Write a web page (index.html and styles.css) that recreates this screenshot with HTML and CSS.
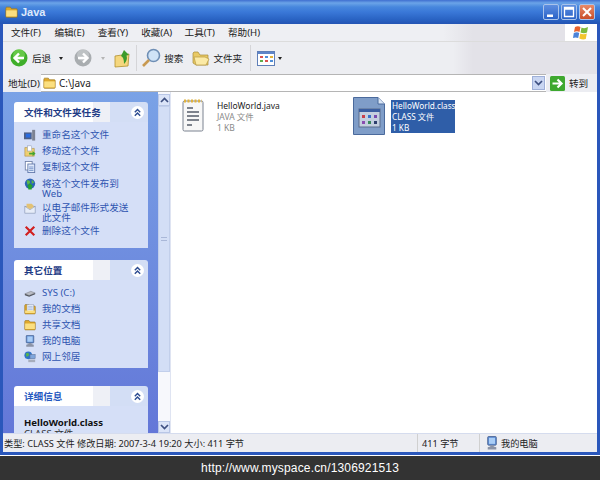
FILE: index.html
```html
<!DOCTYPE html>
<html lang="zh">
<head>
<meta charset="utf-8">
<title>Java</title>
<link rel="stylesheet" href="styles.css">
</head>
<body>
<svg class="defs" width="0" height="0">
  <defs>
    <symbol id="folder" viewBox="0 0 16 14">
      <path d="M1 3 L1 12.500 Q1 13.500 2 13.500 L14 13.500 Q15 13.500 15 12.500 L15 4 Q15 3 14 3 L8 3 L6.500 1 L2 1 Q1 1 1 3Z" fill="#e0a92c" stroke="#97741c" stroke-width=".8"/>
      <path d="M1.500 5 L14.500 5 L14.500 12.500 L1.500 12.500Z" fill="#fbdf80"/>
    </symbol>
    <symbol id="docs" viewBox="0 0 16 14">
      <path d="M1 3 L1 12.500 Q1 13.500 2 13.500 L14 13.500 Q15 13.500 15 12.500 L15 4 Q15 3 14 3 L8 3 L6.500 1 L2 1 Q1 1 1 3Z" fill="#e0a92c" stroke="#97741c" stroke-width=".8"/>
      <rect x="4" y="1" width="9" height="9" fill="#e7edf8" stroke="#8a96ad" stroke-width=".6"/>
      <path d="M5.500 3.500H11.500M5.500 5.500H11.500M5.500 7.500H11.500" stroke="#8ea6cf" stroke-width=".8"/>
      <path d="M1.500 9 L14.500 9 L14.500 12.500 L1.500 12.500Z" fill="#fbdf80"/>
    </symbol>
    <symbol id="computer" viewBox="0 0 14 16">
      <rect x="2" y="0.500" width="10" height="10" rx="1" fill="#5f8fd6" stroke="#47608f"/>
      <rect x="3.500" y="2" width="7" height="7" fill="#a9cdf6"/>
      <path d="M5 10.500 L5 12 L2 13 L2 15.500 L12 15.500 L12 13 L9 12 L9 10.500Z" fill="#8b93a6"/>
    </symbol>
    <symbol id="chevrons" viewBox="0 0 13 13">
      <circle cx="6.500" cy="6.500" r="6.500" fill="#fff"/>
      <path d="M3.800 6.200L6.500 3.500L9.200 6.200M3.800 9.700L6.500 7L9.200 9.700" fill="none" stroke="#2a4a90" stroke-width="1.400"/>
    </symbol>
  </defs>
</svg>
<div class="window">
  <header class="titlebar">
    <svg class="title-icon"><use href="#folder"/></svg>
    <span class="title-text">Java</span>
    <div class="caption">
      <span class="cap cap-blue"><svg viewBox="0 0 14 14"><rect x="3" y="9.500" width="6" height="2.500" fill="#fff"/></svg></span>
      <span class="cap cap-blue"><svg viewBox="0 0 14 14"><path d="M2.500 2.500H11.500V11.500H2.500Z M2.500 4H11.500" fill="none" stroke="#fff" stroke-width="1.300"/></svg></span>
      <span class="cap cap-red"><svg viewBox="0 0 14 14"><path d="M3 3L11 11M11 3L3 11" stroke="#fff" stroke-width="2"/></svg></span>
    </div>
  </header>
  <div class="client">
    <nav class="menubar">
      <div class="menus">
        <span>文件(F)</span><span>编辑(E)</span><span>查看(Y)</span><span>收藏(A)</span><span>工具(T)</span><span>帮助(H)</span>
      </div>
      <div class="logo">
        <svg viewBox="0 0 18 16" width="18" height="16">
          <path d="M3 2 Q6 0.500 8.500 2 L7.500 7 Q5 5.500 2 7Z" fill="#e8622c"/>
          <path d="M9.500 2.500 Q12.500 4 16 2 L15 7.500 Q12 9 8.500 7.500Z" fill="#7cbb3c"/>
          <path d="M1.800 8 Q5 6.500 7.200 8 L6.200 13 Q3.500 11.800 1 13Z" fill="#4b83d8"/>
          <path d="M8.300 8.500 Q11.500 10 14.800 8.500 L13.800 14 Q11 15 7.300 13.500Z" fill="#f3c52e"/>
        </svg>
      </div>
    </nav>
    <div class="toolbar">
      <svg class="tb-round" viewBox="0 0 18 18"><circle cx="9" cy="9" r="8.500" fill="#3fae2a"/><circle cx="9" cy="6" r="6" fill="#7ed85c" opacity=".6"/><path d="M14 9H5M9 4.500L4.500 9L9 13.500" fill="none" stroke="#fff" stroke-width="2.400"/></svg>
      <span class="tb-label tb-back">后退</span>
      <span class="caret tb-caret-back"></span>
      <svg class="tb-round tb-forward" viewBox="0 0 18 18"><circle cx="9" cy="9" r="8.500" fill="#a9adb0"/><circle cx="9" cy="6" r="6" fill="#c8cacd" opacity=".7"/><path d="M4 9H13M9 4.500L13.500 9L9 13.500" fill="none" stroke="#fff" stroke-width="2.400"/></svg>
      <span class="caret caret-grey"></span>
      <svg class="tb-up" viewBox="0 0 16 20"><path d="M1 8L8 7L15 6L14 18L1 19Z" fill="#f5d77e" stroke="#b1902f" stroke-width=".8"/><path d="M10 16Q10 9 7 8L10 2L15 7L12.500 7.500Q14 12 10 16Z" fill="#3c9b2b"/></svg>
      <span class="tb-sep tb-sep-a"></span>
      <svg class="tb-search" viewBox="0 0 20 20"><circle cx="12.500" cy="7.500" r="6" fill="#cfe3f7" stroke="#6f8fb5" stroke-width="1.600"/><path d="M8 12L2 18" stroke="#c89a52" stroke-width="2.600"/></svg>
      <span class="tb-label tb-search-label">搜索</span>
      <svg class="tb-folders" viewBox="0 0 18 16"><path d="M1 3L1 13L4 15L16 15L16 5L8 5L6 2L2 2Z" fill="#e9c964" stroke="#a68a3a" stroke-width=".7"/><path d="M4 15L2 7L13 7L17 9L14 15Z" fill="#fbeaa6" stroke="#b8993f" stroke-width=".7"/></svg>
      <span class="tb-label tb-folder-label">文件夹</span>
      <span class="tb-sep tb-sep-b"></span>
      <svg class="tb-views" viewBox="0 0 18 15"><rect x=".5" y=".5" width="17" height="14" fill="#fff" stroke="#5f7fb8"/><rect x="1" y="1" width="16" height="2" fill="#5f85c8"/><rect x="3" y="5" width="3" height="2" fill="#d9534f"/><rect x="8" y="5" width="3" height="2" fill="#4f8ed9"/><rect x="13" y="5" width="3" height="2" fill="#e2b23a"/><rect x="3" y="9" width="3" height="2" fill="#5fae4a"/><rect x="8" y="9" width="3" height="2" fill="#d9534f"/><rect x="13" y="9" width="3" height="2" fill="#4f8ed9"/></svg>
      <span class="caret"></span>
    </div>
    <div class="addressbar">
      <span class="addr-label">地址(D)</span>
      <div class="addr-input">
        <svg class="addr-folder"><use href="#folder"/></svg>
        <span class="addr-path">C:\Java</span>
        <span class="addr-drop"><svg viewBox="0 0 9 6" width="9" height="6"><path d="M1 1L4.500 4.500L8 1" fill="none" stroke="#3d4f80" stroke-width="1.700"/></svg></span>
      </div>
      <svg class="go-icon" viewBox="0 0 15 15"><rect width="15" height="15" rx="1.500" fill="#3ea82f"/><path d="M2.500 7.500H11M7.500 3.500L11.500 7.500L7.500 11.500" fill="none" stroke="#fff" stroke-width="2.200"/></svg>
      <span class="go-label">转到</span>
    </div>
    <main class="main">
      <aside class="sidebar">
        <section class="panel">
          <h2 class="panel-head"><span class="panel-title panel-title-dark">文件和文件夹任务</span><svg class="chev"><use href="#chevrons"/></svg></h2>
          <ul class="panel-body tasks">
            <li><svg class="ico" viewBox="0 0 14 14"><rect x="0" y="4" width="9" height="8" fill="#4d5f86"/><rect x="2" y="5.500" width="5.500" height="4.500" fill="#2a6ce0"/><rect x="9.500" y="1" width="3.500" height="12.500" fill="#7c8292"/></svg><span>重命名这个文件</span></li>
            <li><svg class="ico" viewBox="0 0 14 14"><path d="M1 3H6L7 4H12V13H1Z" fill="#efcf73" stroke="#a28338" stroke-width=".6"/><rect x="4" y="1" width="5" height="6" fill="#fff" stroke="#8a96ad" stroke-width=".6"/><path d="M6 9H10V7L13.500 10L10 13V11H6Z" fill="#43a52f"/></svg><span>移动这个文件</span></li>
            <li><svg class="ico" viewBox="0 0 14 14"><rect x="1.500" y=".5" width="8" height="10" fill="#fff" stroke="#6d7ea6"/><rect x="4.500" y="3.500" width="8" height="10" fill="#dfe9fb" stroke="#5f76a8"/><path d="M6 7H11M6 9H11M6 11H11" stroke="#6f8dc4"/></svg><span>复制这个文件</span></li>
            <li class="two"><svg class="ico" viewBox="0 0 14 14"><circle cx="7" cy="6.500" r="6" fill="#2b62b8"/><path d="M3 3Q6 2 7 4T4 8ZM9 2L12 5L9 7Z" fill="#5cb845"/><path d="M7 6L11 10H9V13.500H5V10H3Z" fill="#23a32a"/></svg><span>将这个文件发布到 Web</span></li>
            <li class="two"><svg class="ico" viewBox="0 0 14 14"><rect x="1" y="5" width="12" height="8" fill="#e6ecf8" stroke="#8290ae" stroke-width=".7"/><path d="M1 5L7 9L13 5" fill="none" stroke="#8290ae" stroke-width=".7"/><path d="M3 5V2H9L11 4V6L7 8.500L3 6Z" fill="#e3c275"/></svg><span>以电子邮件形式发送此文件</span></li>
            <li><svg class="ico" viewBox="0 0 14 14"><path d="M2 2L12 12M12 2L2 12" stroke="#d11f1f" stroke-width="2.500"/></svg><span>删除这个文件</span></li>
          </ul>
        </section>
        <section class="panel">
          <h2 class="panel-head"><span class="panel-title panel-title-dark">其它位置</span><svg class="chev"><use href="#chevrons"/></svg></h2>
          <ul class="panel-body places">
            <li><svg class="ico" viewBox="0 0 14 14"><path d="M1 8L8 5L13 7L6 10Z" fill="#b9bcc4" stroke="#6d7078" stroke-width=".5"/><path d="M1 8V9.500L6 11.500L13 8.500V7L6 10Z" fill="#54575e"/></svg><span>SYS (C:)</span></li>
            <li><svg class="ico"><use href="#docs"/></svg><span>我的文档</span></li>
            <li><svg class="ico"><use href="#folder"/></svg><span>共享文档</span></li>
            <li><svg class="ico"><use href="#computer"/></svg><span>我的电脑</span></li>
            <li><svg class="ico" viewBox="0 0 14 14"><circle cx="5" cy="5" r="4.500" fill="#2f74c8"/><path d="M2 3L5 2L6 5L3 7Z" fill="#58b64a"/><rect x="7" y="4" width="6" height="5" fill="#7fa6dc" stroke="#5b6f96" stroke-width=".6"/><rect x="5" y="10" width="8" height="3" fill="#a6adbc"/></svg><span>网上邻居</span></li>
          </ul>
        </section>
        <section class="panel panel-details">
          <h2 class="panel-head"><span class="panel-title">详细信息</span><svg class="chev"><use href="#chevrons"/></svg></h2>
          <div class="panel-body details">
            <strong>HelloWorld.class</strong>
            <span>CLASS 文件</span>
          </div>
        </section>
      </aside>
      <div class="scrollbar">
        <span class="sb-btn"><svg viewBox="0 0 9 6" width="9" height="6"><path d="M1 5L4.500 1.500L8 5" fill="none" stroke="#3d4f80" stroke-width="1.700"/></svg></span>
        <span class="sb-thumb"><i></i></span>
        <span class="sb-btn sb-down"><svg viewBox="0 0 9 6" width="9" height="6"><path d="M1 1L4.500 4.500L8 1" fill="none" stroke="#3d4f80" stroke-width="1.700"/></svg></span>
      </div>
      <div class="files">
        <div class="file">
          <svg class="file-icon-java" viewBox="0 0 24 34"><rect x="2" y="2" width="20" height="30" rx="1.500" fill="#f7f7f7" stroke="#7b8290"/><path d="M3 2H21" stroke="#e0b23c" stroke-width="3" stroke-dasharray="2 1.500"/><path d="M6 9H12M6 13H18M6 17H18M6 21H18M6 26H11" stroke="#555c6a" stroke-width="1.500"/></svg>
          <div class="file-text">
            <span class="file-name">HelloWorld.java</span>
            <span class="file-meta">JAVA 文件</span>
            <span class="file-meta">1 KB</span>
          </div>
        </div>
        <div class="file file-selected">
          <svg class="file-icon-class" viewBox="0 0 32 38"><path d="M.5 .5H25L31.500 7V37.500H.5Z" fill="#7f9dc8" stroke="#4b6a9c"/><path d="M25 .5V7H31.500" fill="#dbe6f5" stroke="#4b6a9c"/><rect x="6" y="12" width="21" height="18" fill="#c4cfdf" stroke="#5a6c8c"/><rect x="6" y="12" width="21" height="3" fill="#3a5ea0"/><rect x="9" y="18" width="3" height="3" fill="#c8404a"/><rect x="15" y="18" width="3" height="3" fill="#3a72c8"/><rect x="21" y="18" width="3" height="3" fill="#7a4cb0"/><rect x="9" y="24" width="3" height="3" fill="#8a4cb0"/><rect x="15" y="24" width="3" height="3" fill="#3a8a5c"/><rect x="21" y="24" width="3" height="3" fill="#2e3f6e"/></svg>
          <div class="file-text sel">
            <span>HelloWorld.class</span>
            <span>CLASS 文件</span>
            <span>1 KB</span>
          </div>
        </div>
      </div>
    </main>
    <footer class="statusbar">
      <span class="st-main">类型: CLASS 文件 修改日期: 2007-3-4 19:20 大小: 411 字节</span>
      <span class="st-size">411 字节</span>
      <span class="st-zone"><svg class="ico-st"><use href="#computer"/></svg>我的电脑</span>
    </footer>
  </div>
</div>
<div class="watermark">http://www.myspace.cn/1306921513</div>
</body>
</html>
```

FILE: styles.css
```css
* { box-sizing: border-box; }
html, body { margin: 0; padding: 0; }
body {
  width: 600px;
  height: 480px;
  overflow: hidden;
  display: flex;
  flex-direction: column;
  font-family: "Noto Sans", "Noto Sans CJK SC", sans-serif;
  font-size: 9.600px;
  color: #222;
  background: #333;
}
.defs { display: block; height: 0; }
ul { list-style: none; margin: 0; padding: 0; }
h2 { margin: 0; font-size: inherit; }

.window {
  height: 456px;
  flex: none;
  display: flex;
  flex-direction: column;
  background: #2a57bb;
  border-bottom: 1px solid #fff;
}
.titlebar {
  height: 24px;
  flex: none;
  display: flex;
  align-items: center;
  padding: 0 5px 0 5px;
  background: linear-gradient(#3f6fd0 0, #6ba4e8 3px, #4787dd 7px, #3a78d8 12px, #2a64c4 19px, #2354b4 24px);
}
.title-icon { width: 13px; height: 12px; }
.title-text {
  margin-left: 3px;
  font: bold 11px "Liberation Sans", sans-serif;
  color: #dfeafb;
}
.caption { margin-left: auto; display: flex; gap: 2px; }
.cap { width: 16px; height: 16px; border: 1px solid #a9c3ea; border-radius: 2px; display: flex; }
.cap svg { width: 14px; height: 14px; }
.cap-blue { background: linear-gradient(#5d8ee0, #2a63c8); }
.cap-red { background: linear-gradient(#e88a68, #c94f2a); }

.client {
  flex: 1;
  min-height: 0;
  margin: 0 3px 3px;
  display: flex;
  flex-direction: column;
  background: #ecedf2;
}
.menubar {
  height: 18px;
  flex: none;
  display: flex;
  justify-content: space-between;
  background: linear-gradient(90deg, #eeeff3 0, #eeeff3 440px, #e3e2e8 470px);
  border-bottom: 1px solid #dcdcdc;
}
.menus { display: flex; gap: 10.400px; padding: 0 0 0 8px; align-items: center; line-height: 17px; }
.menus span { width: 33px; white-space: nowrap; }
.logo {
  width: 32px;
  background: #fff;
  display: flex;
  justify-content: center;
  align-items: center;
}
.toolbar {
  height: 32px;
  flex: none;
  display: flex;
  align-items: center;
  padding-left: 7px;
  background: linear-gradient(90deg, #edeef2 0, #edeef2 450px, #e3e2e8 470px);
}
.tb-round { width: 18px; height: 18px; flex: none; }
.tb-label { flex: none; }
.tb-back { margin-left: 4px; }
.caret {
  width: 0; height: 0; flex: none;
  margin-left: 3px;
  border: 2.500px solid transparent;
  border-top: 3px solid #222;
  border-bottom: 0;
}
.tb-caret-back { margin-left: 8px; }
.caret-grey { border-top-color: #b5b5b5; margin-left: 9px; }
.tb-forward { margin-left: 11px; }
.tb-up { width: 16px; height: 20px; margin-left: 9px; flex: none; }
.tb-sep { width: 1px; height: 26px; background: #d5d5d8; flex: none; }
.tb-sep-a { margin-left: 6px; }
.tb-search { width: 20px; height: 20px; margin-left: 4px; flex: none; }
.tb-search-label { margin-left: 3px; }
.tb-folders { width: 18px; height: 16px; margin-left: 9px; flex: none; }
.tb-folder-label { margin-left: 3px; }
.tb-sep-b { margin-left: 8px; }
.tb-views { width: 18px; height: 15px; margin-left: 6px; flex: none; }

.addressbar {
  height: 18px;
  flex: none;
  display: flex;
  align-items: center;
  padding-left: 5px;
  background: #ecedf2;
}
.addr-label { width: 33px; flex: none; white-space: nowrap; }
.addr-input {
  width: 505px;
  height: 18px;
  flex: none;
  display: flex;
  align-items: center;
  background: #fff;
  border-top: 1px solid #b5b5b5;
  border-bottom: 1px solid #b5b5b5;
  padding-left: 2px;
}
.addr-folder { width: 13px; height: 12px; }
.addr-path { margin-left: 3px; font-size: 10px; }
.addr-drop {
  margin-left: auto;
  margin-right: 1px;
  width: 13px; height: 14px;
  background: #c9d6f2;
  border: 1px solid #9fb0d8;
  display: flex; align-items: center; justify-content: center;
}
.go-icon { width: 15px; height: 15px; margin-left: 4px; flex: none; }
.go-label { margin-left: 4px; }

.main { flex: 1; min-height: 0; display: flex; background: #fff; }
.sidebar {
  width: 155px;
  flex: none;
  overflow: hidden;
  padding: 10px 10px 0 11px;
  display: flex;
  flex-direction: column;
  gap: 12px;
  background: linear-gradient(#7aa2e6, #6377d8);
}
.panel { flex: none; }
.panel-details { margin-top: 6px; }
.panel-head {
  height: 20px;
  display: flex;
  align-items: center;
  justify-content: space-between;
  padding: 0 4px 0 10px;
  border-radius: 3px 3px 0 0;
  background: linear-gradient(90deg, #fff 0, #fff 79px, #eef0f6 79px, #eef0f6 96px, #d3def5 96px);
  color: #2558c0;
}
.panel-title { font-weight: 700; }
.panel-title-dark { color: #1f3c85; }
.chev { width: 13px; height: 13px; flex: none; }
.panel-body {
  background: #d5dff7;
  padding: 5px 10px 0 10px;
  color: #2f55b0;
}
.tasks { height: 126px; }
.places { height: 88px; }
.panel-body li {
  display: flex;
  gap: 6px;
  line-height: 10px;
  padding: 3px 0;
  height: 16px;
}
.panel-body li.two { height: 24px; padding-top: 4px; }
.panel-body li span { width: 92px; }
.ico { width: 12px; height: 12px; flex: none; margin-top: -1px; }
.details {
  height: 60px;
  padding-top: 11px;
  color: #333;
  display: flex;
  flex-direction: column;
  line-height: 11px;
}
.details strong { color: #111; font-weight: 700; }

.scrollbar {
  width: 13px;
  flex: none;
  display: flex;
  flex-direction: column;
  background: #f7f8fc;
  padding-top: 2px;
  border-right: 1px solid #dfe4f2;
}
.sb-btn {
  width: 12px; height: 12px;
  background: #dbe4f8;
  border: 1px solid #b8c6e6;
  display: flex; align-items: center; justify-content: center;
  flex: none;
}
.sb-thumb {
  height: 266px;
  width: 12px;
  flex: none;
  background: #d3def6;
  border: 1px solid #c2cfeb;
  display: flex; align-items: center; justify-content: center;
}
.sb-thumb i { width: 6px; height: 4px; border-top: 1px solid #a9b7d8; border-bottom: 1px solid #a9b7d8; }
.sb-down { margin-top: auto; }

.files {
  flex: 1;
  display: grid;
  grid-template-columns: 172px 172px;
  align-content: start;
  padding: 5px 0 0 10px;
  background: #fff;
}
.file { display: flex; gap: 12px; align-items: flex-start; }
.file-icon-java { width: 24px; height: 34px; flex: none; margin-top: 2px; }
.file-icon-class { width: 32px; height: 38px; flex: none; }
.file-selected { gap: 6px; }
.file-text {
  display: flex;
  flex-direction: column;
  margin-top: 3px;
  font-size: 8.500px;
  line-height: 11px;
}
.file-name { color: #222; }
.file-meta { color: #8a8a8a; }
.sel { background: #2f5ea8; color: #fff; width: 64px; white-space: nowrap; font-size: 8.200px; padding-left: 1px; }

.statusbar {
  height: 19px;
  flex: none;
  display: flex;
  align-items: center;
  background: #ecedf2;
  border-top: 1px solid #d5dcee;
  font-size: 9.200px;
}
.statusbar span { display: flex; align-items: center; height: 100%; }
.st-main { width: 414px; padding-left: 1px; white-space: nowrap; }
.st-size { width: 62px; padding-left: 4px; border-left: 1px solid #d0d0d0; }
.st-zone { padding-left: 6px; border-left: 1px solid #d0d0d0; gap: 3px; }
.ico-st { width: 12px; height: 14px; }

.watermark {
  flex: 1;
  text-align: right;
  padding-right: 201px;
  color: #fff;
  font: 12px/24px "Liberation Sans", sans-serif;
  letter-spacing: .16px;
  background: #333;
}
```
